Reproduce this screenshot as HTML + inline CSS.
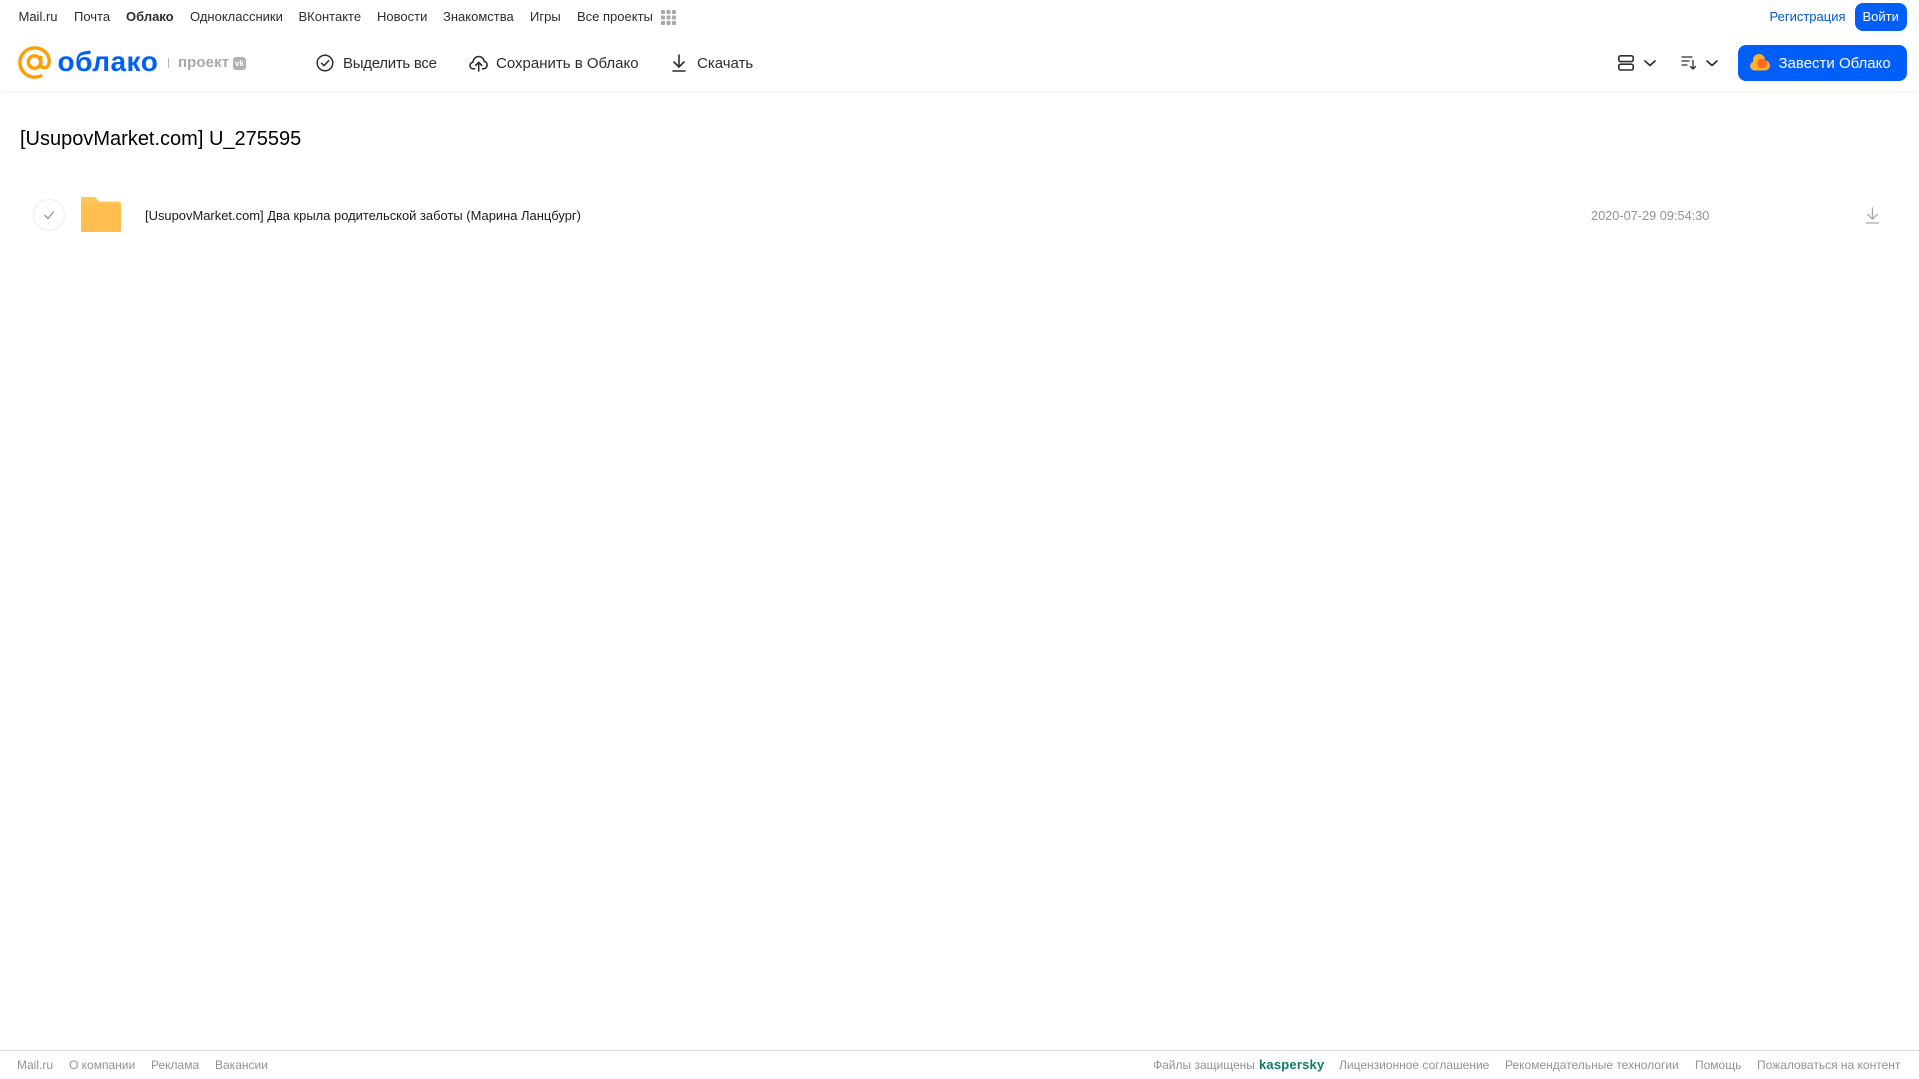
<!DOCTYPE html>
<html lang="ru"><head><meta charset="utf-8"><title>Облако</title>
<style>
html,body{margin:0;padding:0;background:#fff}
body{width:1919px;height:1079px;position:relative;overflow:hidden;font-family:"Liberation Sans",sans-serif}
.t{position:absolute;white-space:nowrap;line-height:16px}
.n{top:9px;font-size:13px;color:#2c2d2e}
.b{top:54.500px;font-size:15px;line-height:18px;color:#2c2d2e}
.f{top:1057px;font-size:12px;color:#919399}
svg{position:absolute;overflow:visible}
#hdr{position:absolute;left:0;top:0;width:1919px;height:91px;background:#fff;box-shadow:0 1px 6px rgba(0,0,0,.07)}
</style></head><body>
<div id="hdr"></div>
<span class="t n" style="left:18.500px">Mail.ru</span>
<span class="t n" style="left:74px">Почта</span>
<span class="t n" style="left:126px;font-weight:bold">Облако</span>
<span class="t n" style="left:190px">Одноклассники</span>
<span class="t n" style="left:298.500px">ВКонтакте</span>
<span class="t n" style="left:377px">Новости</span>
<span class="t n" style="left:443px">Знакомства</span>
<span class="t n" style="left:530px">Игры</span>
<span class="t n" style="left:577px">Все проекты</span>
<svg style="left:661px;top:10px" width="15" height="15" fill="#a5a7ab"><rect width="4" height="4" rx="1"/><rect x="5.500" width="4" height="4" rx="1"/><rect x="11" width="4" height="4" rx="1"/><rect y="5.500" width="4" height="4" rx="1"/><rect x="5.500" y="5.500" width="4" height="4" rx="1"/><rect x="11" y="5.500" width="4" height="4" rx="1"/><rect y="11" width="4" height="4" rx="1"/><rect x="5.500" y="11" width="4" height="4" rx="1"/><rect x="11" y="11" width="4" height="4" rx="1"/></svg>
<span class="t n" style="left:1769.500px;color:#005bd1">Регистрация</span>
<div style="position:absolute;left:1855px;top:3px;width:52px;height:28px;border-radius:8px;background:#005ff9"></div>
<span class="t n" style="left:1862.500px;color:#fff">Войти</span>

<svg style="left:18px;top:46px" width="34" height="34" viewBox="0 0 36 36" fill="none" stroke="#ff9e00" stroke-width="3.600"><circle cx="17.500" cy="17" r="6.600"/><path d="M24.200 10.500v9.500c0 4.500 7.900 4.500 8.700-2.200C33.900 8.400 26.500 2 17.500 2 9 2 2 9 2 17.500S9 33 17.500 33c3 0 5.500-.7 8-2.100"/></svg>
<span class="t" style="left:57.500px;top:44px;line-height:36px;font-size:28px;font-weight:bold;color:#005ff9;letter-spacing:.5px">облако</span>
<div style="position:absolute;left:168px;top:58px;width:1px;height:10px;background:#b5b7bb"></div>
<span class="t" style="left:178px;top:54px;line-height:18px;font-size:15px;font-weight:bold;color:#a5a7ab;letter-spacing:.1px">проект</span>
<div style="position:absolute;left:233px;top:57px;width:13px;height:13px;border-radius:3px;background:#b0b2b6;color:#fff;font-size:8px;line-height:13px;text-align:center;font-weight:bold">vk</div>

<svg style="left:316px;top:54px" width="18" height="18" viewBox="0 0 18 18" fill="none" stroke="#2c2d2e" stroke-width="1.500"><circle cx="9" cy="9" r="7.800"/><path d="M5.500 9.200l2.500 2.500 4.700-5" stroke-linecap="round" stroke-linejoin="round"/></svg>
<span class="t b" style="left:343px;letter-spacing:-.28px">Выделить все</span>
<svg style="left:469px;top:54px" width="19" height="18" viewBox="0 0 19 18" fill="none" stroke="#2c2d2e" stroke-width="1.600" stroke-linecap="round" stroke-linejoin="round"><path d="M5.500 14.800H4.200C2.300 14.800 1 13.300 1 11.500c0-1.700 1.200-3 2.900-3.200C4.300 5 6.600 2.500 9.600 2.500c2.900 0 5.100 2.100 5.600 4.800 1.700.3 2.900 1.900 2.900 3.700 0 2-1.500 3.800-3.500 3.800h-1"/><path d="M9.700 17V8.500M6.700 11.300l3-3 3 3"/></svg>
<span class="t b" style="left:496px">Сохранить в Облако</span>
<svg style="left:671px;top:54px" width="16" height="18" viewBox="0 0 16 18" fill="none" stroke="#2c2d2e" stroke-width="1.600" stroke-linecap="round" stroke-linejoin="round"><path d="M8 1v11.500M3 8l5 5 5-5M2 17h12"/></svg>
<span class="t b" style="left:697px">Скачать</span>

<svg style="left:1618px;top:55px" width="16" height="16" viewBox="0 0 16 16" fill="none" stroke="#2c2d2e" stroke-width="1.600"><rect x=".8" y=".8" width="14.400" height="5.800" rx="1.800"/><rect x=".8" y="9.200" width="14.400" height="5.800" rx="1.800"/></svg>
<svg style="left:1644px;top:60px" width="12" height="7" fill="none" stroke="#2c2d2e" stroke-width="1.700" stroke-linecap="round" stroke-linejoin="round"><path d="M1 1l5 4.500L11 1"/></svg>
<svg style="left:1681px;top:56px" width="16" height="14" viewBox="0 0 16 14" fill="none" stroke="#2c2d2e" stroke-width="1.300" stroke-linecap="round" stroke-linejoin="round"><path d="M1 1h10M1 5h7M1 9h5M12 4.500v8.500M9.500 10.500L12 13l2.500-2.500"/></svg>
<svg style="left:1706px;top:60px" width="12" height="7" fill="none" stroke="#2c2d2e" stroke-width="1.700" stroke-linecap="round" stroke-linejoin="round"><path d="M1 1l5 4.500L11 1"/></svg>
<div style="position:absolute;left:1738px;top:45px;width:169px;height:36px;border-radius:8px;background:#005ff9"></div>
<svg style="left:1750px;top:54px" width="20" height="17" viewBox="0 0 20 17" fill="#ffb02e"><circle cx="9" cy="6" r="6"/><circle cx="4.500" cy="12" r="4.500"/><circle cx="15" cy="11.500" r="5"/><rect x="4" y="10" width="11" height="6.500"/><circle cx="12" cy="9.500" r="5" fill="#ff6a1f"/></svg>
<span class="t b" style="left:1778.500px;color:#fff">Завести Облако</span>

<span class="t" style="left:20px;top:125px;font-size:20px;line-height:28px;color:#000">[UsupovMarket.com] U_275595</span>

<svg style="left:33px;top:199px" width="32" height="32" viewBox="0 0 32 32" fill="none"><circle cx="16" cy="16" r="15.500" stroke="#ecedef"/><path d="M12 16.500l3 3 5.500-6.500" stroke="#8b8d91" stroke-width="1.300" stroke-linecap="round" stroke-linejoin="round"/></svg>
<svg style="left:81px;top:197px" width="40" height="35" viewBox="0 0 40 35"><path d="M2 0h10c2 0 3 .8 4 2l2 2.500H38a2 2 0 0 1 2 2V33a2 2 0 0 1-2 2H2a2 2 0 0 1-2-2V2a2 2 0 0 1 2-2z" fill="#ffc75a"/><path d="M0 9a2 2 0 0 1 2-2h36a2 2 0 0 1 2 2v24a2 2 0 0 1-2 2H2a2 2 0 0 1-2-2z" fill="#ffbe4d"/></svg>
<span class="t" style="left:145px;top:207.500px;font-size:12.940px;color:#1a1a1a">[UsupovMarket.com] Два крыла родительской заботы (Марина Ланцбург)</span>
<span class="t" style="left:1591px;top:207.500px;font-size:12.750px;color:#919399">2020-07-29 09:54:30</span>
<svg style="left:1866px;top:207px" width="13" height="17" viewBox="0 0 13 17" fill="none" stroke="#a5a7ab" stroke-width="1.300" stroke-linecap="round" stroke-linejoin="round"><path d="M6.500 1v11M1.800 7.500l4.700 4.700 4.700-4.700M.5 16h12"/></svg>

<div style="position:absolute;left:0;top:1050px;width:1919px;height:1px;background:#dcdcdc"></div>
<span class="t f" style="left:17px">Mail.ru</span>
<span class="t f" style="left:69px">О компании</span>
<span class="t f" style="left:151px">Реклама</span>
<span class="t f" style="left:215px">Вакансии</span>
<span class="t f" style="left:1153px">Файлы защищены</span>
<span class="t f" style="left:1259px;font-weight:bold;color:#0b7d6a;font-size:13px;letter-spacing:.2px">kaspersky</span>
<span class="t f" style="left:1339px">Лицензионное соглашение</span>
<span class="t f" style="left:1505px">Рекомендательные технологии</span>
<span class="t f" style="left:1695px">Помощь</span>
<span class="t f" style="left:1757px">Пожаловаться на контент</span>
</body></html>
